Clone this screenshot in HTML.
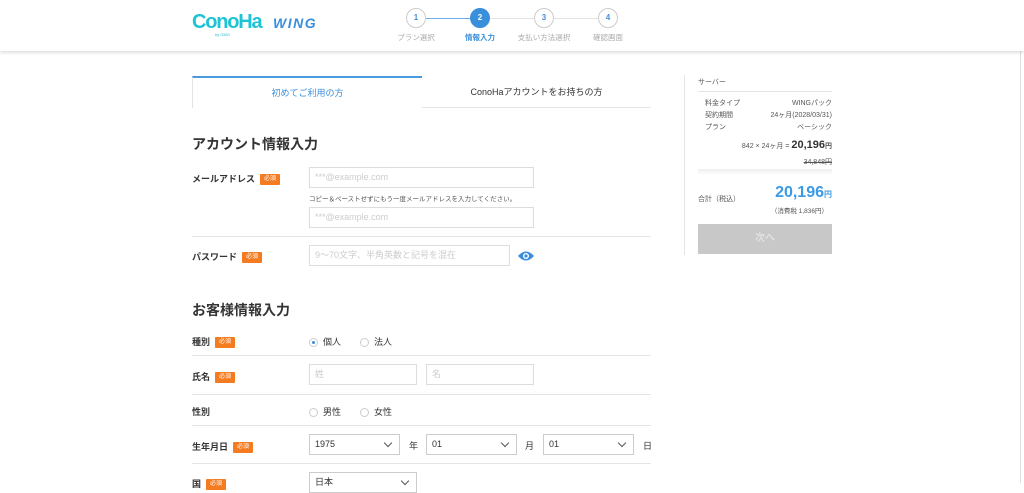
<!DOCTYPE html>
<html><head><meta charset="utf-8"><style>
*{box-sizing:border-box;margin:0;padding:0}
body{width:1024px;height:483px;overflow:hidden;background:#fff;font-family:"Liberation Sans","Noto Sans CJK JP",sans-serif;color:#333;position:relative}
.a{position:absolute}
.hdr{left:0;top:0;width:1024px;height:51px;background:#fff;box-shadow:0 2px 3px rgba(0,0,0,.12);z-index:2}
.c{width:20px;height:20px;border-radius:50%;border:1px solid #ccc;background:#fff;font-size:8px;font-weight:bold;text-align:center;line-height:18px;color:#4a8fd6;top:8px}
.sl{top:32px;font-size:7.5px;color:#aaa;text-align:center;width:70px}
.ln{top:18px;height:1px;width:44px}
.req{display:inline-block;background:#f47b20;color:#fff;font-size:6px;padding:0 4px;height:11px;line-height:11px;border-radius:1px;vertical-align:middle;margin-left:5px;font-weight:normal}
.lb{font-size:9px;font-weight:bold;left:192px}
.in{border:1px solid #ddd;height:21px;font-size:9px;color:#ccc;padding-left:5px;line-height:19px}
.hr{left:192px;width:459px;height:1px;background:#e4e4e4}
.sel{border:1px solid #ccc;height:21px;font-size:9px;color:#333;padding-left:5px;line-height:19px}
.sel:after{content:"";position:absolute;right:8px;top:5px;width:5px;height:5px;border-right:1.3px solid #555;border-bottom:1.3px solid #555;transform:rotate(45deg)}
.rd{width:9px;height:9px;border-radius:50%;border:1px solid #ccc;display:inline-block;vertical-align:middle;margin-right:5px;position:relative}
.rt{font-size:9px}
.sm{font-size:7px;color:#555}
</style></head><body>
<div class="a hdr">
 <div class="a" style="left:192px;top:11px;font-size:20px;font-weight:bold;color:#1ec3d6;letter-spacing:-1.2px">ConoHa</div>
 <div class="a" style="left:215px;top:32px;font-size:4px;color:#1ec3d6">by GMO</div>
 <div class="a" style="left:273px;top:15px;font-size:14px;font-weight:bold;font-style:italic;color:#3a8fdc;letter-spacing:1.5px">WING</div>
 <div class="a ln" style="left:426px;background:#6aaee8"></div>
 <div class="a ln" style="left:490px;background:#e4e4e4"></div>
 <div class="a ln" style="left:554px;background:#e4e4e4"></div>
 <div class="a c" style="left:406px">1</div>
 <div class="a c" style="left:470px;background:#3a8fdc;border-color:#3a8fdc;color:#fff">2</div>
 <div class="a c" style="left:534px">3</div>
 <div class="a c" style="left:598px">4</div>
 <div class="a sl" style="left:381px">プラン選択</div>
 <div class="a sl" style="left:445px;color:#3a8fdc;font-weight:bold">情報入力</div>
 <div class="a sl" style="left:509px">支払い方法選択</div>
 <div class="a sl" style="left:573px">確認画面</div>
</div>
<div class="a" style="left:1020px;top:51px;width:1px;height:432px;background:#e0e0e0"></div>
<div class="a" style="left:192px;top:76px;width:230px;height:32px;border-top:2px solid #4a9ae0;border-left:1px solid #e4e4e4;font-size:9px;color:#3a8fdc;text-align:center;line-height:30px">初めてご利用の方</div>
<div class="a" style="left:422px;top:76px;width:229px;height:32px;border-bottom:1px solid #e4e4e4;font-size:9px;text-align:center;line-height:32px">ConoHaアカウントをお持ちの方</div>
<div class="a" style="left:192px;top:134px;font-size:14px;font-weight:bold">アカウント情報入力</div>
<div class="a lb" style="top:172px">メールアドレス<span class="req">必須</span></div>
<div class="a in" style="left:309px;top:167px;width:225px">***@example.com</div>
<div class="a sm" style="left:309px;top:193px;font-size:6.5px">コピー＆ペーストせずにもう一度メールアドレスを入力してください。</div>
<div class="a in" style="left:309px;top:207px;width:225px">***@example.com</div>
<div class="a hr" style="top:236px"></div>
<div class="a lb" style="top:250px">パスワード<span class="req">必須</span></div>
<div class="a in" style="left:309px;top:245px;width:201px">9〜70文字、半角英数と記号を混在</div>
<svg class="a" style="left:517px;top:250px" width="18" height="12" viewBox="0 0 18 12"><path d="M1 6Q9-3 17 6Q9 15 1 6Z" fill="#3a8fdc"/><circle cx="9" cy="6" r="3" fill="#fff"/><circle cx="9" cy="6" r="1.6" fill="#3a8fdc"/></svg>
<div class="a" style="left:192px;top:300px;font-size:14px;font-weight:bold">お客様情報入力</div>
<div class="a lb" style="top:335px">種別<span class="req">必須</span></div>
<div class="a rt" style="left:309px;top:335px"><span class="rd"><span class="a" style="left:2px;top:2px;width:3px;height:3px;border-radius:50%;background:#3a8fdc"></span></span>個人</div>
<div class="a rt" style="left:360px;top:335px"><span class="rd"></span>法人</div>
<div class="a hr" style="top:355px"></div>
<div class="a lb" style="top:370px">氏名<span class="req">必須</span></div>
<div class="a in" style="left:309px;top:364px;width:108px">姓</div>
<div class="a in" style="left:426px;top:364px;width:108px">名</div>
<div class="a hr" style="top:394px"></div>
<div class="a lb" style="top:405px">性別</div>
<div class="a rt" style="left:309px;top:405px"><span class="rd"></span>男性</div>
<div class="a rt" style="left:360px;top:405px"><span class="rd"></span>女性</div>
<div class="a hr" style="top:425px"></div>
<div class="a lb" style="top:440px">生年月日<span class="req">必須</span></div>
<div class="a sel" style="left:309px;top:434px;width:91px">1975</div>
<div class="a rt" style="left:409px;top:439px">年</div>
<div class="a sel" style="left:426px;top:434px;width:91px">01</div>
<div class="a rt" style="left:525px;top:439px">月</div>
<div class="a sel" style="left:543px;top:434px;width:91px">01</div>
<div class="a rt" style="left:643px;top:439px">日</div>
<div class="a hr" style="top:463px"></div>
<div class="a lb" style="top:477px">国<span class="req">必須</span></div>
<div class="a sel" style="left:309px;top:472px;width:108px">日本</div>

<div class="a" style="left:684px;top:75px;width:1px;height:180px;background:#e4e4e4"></div>
<div class="a sm" style="left:698px;top:77px">サーバー</div>
<div class="a" style="left:698px;top:91px;width:134px;height:1px;background:#e4e4e4"></div>
<div class="a sm" style="left:705px;top:98px">料金タイプ</div><div class="a sm" style="right:192px;top:98px">WINGパック</div>
<div class="a sm" style="left:705px;top:110px">契約期間</div><div class="a sm" style="right:192px;top:110px">24ヶ月(2028/03/31)</div>
<div class="a sm" style="left:705px;top:122px">プラン</div><div class="a sm" style="right:192px;top:122px">ベーシック</div>
<div class="a sm" style="right:192px;top:139px">842 × 24ヶ月 = <b style="font-size:11px;color:#333">20,196</b><b>円</b></div>
<div class="a sm" style="right:192px;top:157px;text-decoration:line-through">34,848円</div>
<div class="a" style="left:698px;top:169px;width:134px;height:6px;background:linear-gradient(#eee,#fff)"></div>
<div class="a sm" style="left:698px;top:194px">合計（税込）</div>
<div class="a" style="right:192px;top:184px;font-size:16px;font-weight:bold;color:#3a9ae6">20,196<span style="font-size:8px">円</span></div>
<div class="a sm" style="right:196px;top:205px;font-size:6.5px">（消費税 1,836円）</div>
<div class="a" style="left:698px;top:224px;width:134px;height:30px;background:#c8c8c8;color:#e0e0e0;font-size:10px;text-align:center;line-height:30px;font-weight:bold">次へ</div>
</body></html>
